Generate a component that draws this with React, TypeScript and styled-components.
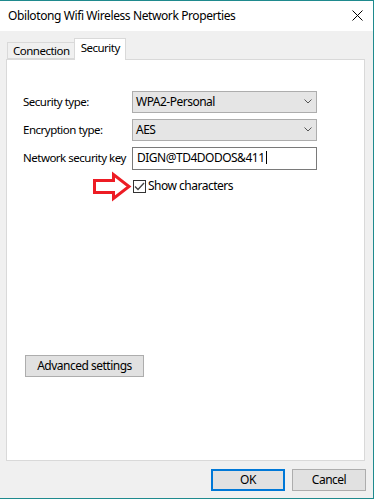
import React from "react";
import styled, { createGlobalStyle } from "styled-components";

const Global = createGlobalStyle`
  html, body { margin: 0; padding: 0; background: #ffffff; }
  body { font-family: "Noto Sans", "DejaVu Sans", sans-serif; font-size: 12px; letter-spacing: -0.5px; color: #000; }
  * { box-sizing: border-box; }
`;

const Window = styled.div`
  width: 374px;
  height: 499px;
  border-top: 1px solid #1f8a8e;
  border-right: 1px solid #1f8a8e;
  border-bottom: 1px solid #1f8a8e;
  display: flex;
  flex-direction: column;
  background: #f0f0f0;
`;

const TitleBar = styled.div`
  height: 30px;
  flex: none;
  background: #ffffff;
  display: flex;
  align-items: center;
  justify-content: space-between;
  padding: 0 10px 0 8px;
`;

const Title = styled.span`
  font-size: 12px;
  line-height: 14px;
  padding-bottom: 1px;
  letter-spacing: -0.4px;
`;

const CloseBtn = styled.span`
  display: flex;
  width: 11px;
  height: 11px;
  margin-bottom: 1px;
`;

const Body = styled.div`
  flex: 1;
  display: flex;
  flex-direction: column;
  padding: 7px 0 0 6px;
`;

const TabStrip = styled.div`
  display: flex;
  align-items: flex-end;
  height: 21px;
  padding-left: 1px;
  position: relative;
  z-index: 1;
`;

const Tab = styled.div<{ $active?: boolean }>`
  height: ${(p) => (p.$active ? "22px" : "17px")};
  margin-bottom: ${(p) => (p.$active ? "-1px" : "0")};
  padding: ${(p) => (p.$active ? "2px 5px 0 6px" : "1px 4px 0 5px")};
  border: 1px solid #d9d9d9;
  border-bottom: ${(p) => (p.$active ? "none" : "1px solid #d9d9d9")};
  margin-left: ${(p) => (p.$active ? "-1px" : "0")};
  background: ${(p) => (p.$active ? "#ffffff" : "#f0f0f0")};
  font-size: 11.5px;
  line-height: 14px;
  white-space: nowrap;
`;

const Panel = styled.div`
  width: 359px;
  height: 402px;
  background: #ffffff;
  border: 1px solid #d9d9d9;
  padding: 31px 0 0 16px;
  display: flex;
  flex-direction: column;
  align-items: flex-start;
`;

const FormGrid = styled.div`
  display: grid;
  grid-template-columns: 109px 185px;
  grid-auto-rows: 22px;
  row-gap: 6px;
  align-items: center;
`;

const Label = styled.span`
  font-size: 11.5px;
  line-height: 14px;
  padding-bottom: 1px;
  white-space: nowrap;
`;

const Select = styled.div`
  height: 22px;
  background: #e5e5e5;
  border: 1px solid #adadad;
  display: flex;
  align-items: center;
  justify-content: space-between;
  padding: 0 4px 1px 3px;
  font-size: 12px;
`;

const Input = styled.div`
  height: 23px;
  background: #ffffff;
  border: 1px solid #7a7a7a;
  display: flex;
  align-items: center;
  padding: 0 0 1px 4px;
  font-size: 12px;
`;

const Caret = styled.span`
  display: inline-block;
  width: 1px;
  height: 13px;
  background: #000;
  margin-left: 1px;
`;

const CheckRow = styled.div`
  display: flex;
  align-items: center;
  margin: 2px 0 0 68px;
`;

const Box = styled.span`
  width: 13px;
  height: 13px;
  border: 1px solid #333333;
  background: #ffffff;
  display: flex;
  align-items: center;
  justify-content: center;
  margin-right: 2px;
`;

const CheckLabel = styled.span`
  font-size: 12px;
  line-height: 14px;
  padding-bottom: 1px;
`;

const Button = styled.div<{ $default?: boolean; $w: number }>`
  width: ${(p) => p.$w}px;
  height: 22px;
  background: #e1e1e1;
  border: ${(p) => (p.$default ? "2px solid #0078d7" : "1px solid #adadad")};
  display: flex;
  align-items: center;
  justify-content: center;
  font-size: 12px;
  padding-bottom: 1px;
`;

const AdvancedWrap = styled.div`
  margin: 153px 0 0 2px;
`;

const Footer = styled.div`
  display: flex;
  justify-content: flex-end;
  gap: 7px;
  padding: 8px 7px 0 0;
`;

const Chevron = () => (
  <svg width="8" height="5" viewBox="0 0 8 5">
    <polyline points="0.5,0.5 4,4 7.5,0.5" fill="none" stroke="#555" strokeWidth="1" />
  </svg>
);

const Arrow = () => (
  <svg width="42" height="31" viewBox="0 0 42 31">
    <polygon
      points="3.5,9.5 22.5,9.5 22.5,3.5 38,15.5 22.5,27.5 22.5,21.5 3.5,21.5"
      fill="#ffffff"
      stroke="#ed1c24"
      strokeWidth="3"
      strokeLinejoin="miter"
    />
  </svg>
);

export default function App() {
  return (
    <>
      <Global />
      <Window>
        <TitleBar>
          <Title>Obilotong Wifi Wireless Network Properties</Title>
          <CloseBtn>
            <svg width="11" height="11" viewBox="0 0 11 11">
              <line x1="0.5" y1="0.5" x2="10.5" y2="10.5" stroke="#000" strokeWidth="1" />
              <line x1="10.5" y1="0.5" x2="0.5" y2="10.5" stroke="#000" strokeWidth="1" />
            </svg>
          </CloseBtn>
        </TitleBar>
        <Body>
          <TabStrip>
            <Tab>Connection</Tab>
            <Tab $active>Security</Tab>
          </TabStrip>
          <Panel>
            <FormGrid>
              <Label>Security type:</Label>
              <Select>
                <span>WPA2-Personal</span>
                <Chevron />
              </Select>
              <Label>Encryption type:</Label>
              <Select>
                <span>AES</span>
                <Chevron />
              </Select>
              <Label>Network security key</Label>
              <Input>
                <span>DIGN@TD4DODOS&amp;411</span>
                <Caret />
              </Input>
            </FormGrid>
            <CheckRow>
              <Arrow />
              <Box>
                <svg width="11" height="9" viewBox="0 0 11 9">
                  <polyline points="1,4.5 4,7.5 10,1" fill="none" stroke="#444" strokeWidth="1.3" />
                </svg>
              </Box>
              <CheckLabel>Show characters</CheckLabel>
            </CheckRow>
            <AdvancedWrap>
              <Button $w={119}>Advanced settings</Button>
            </AdvancedWrap>
          </Panel>
          <Footer>
            <Button $default $w={74}>OK</Button>
            <Button $w={74}>Cancel</Button>
          </Footer>
        </Body>
      </Window>
    </>
  );
}
